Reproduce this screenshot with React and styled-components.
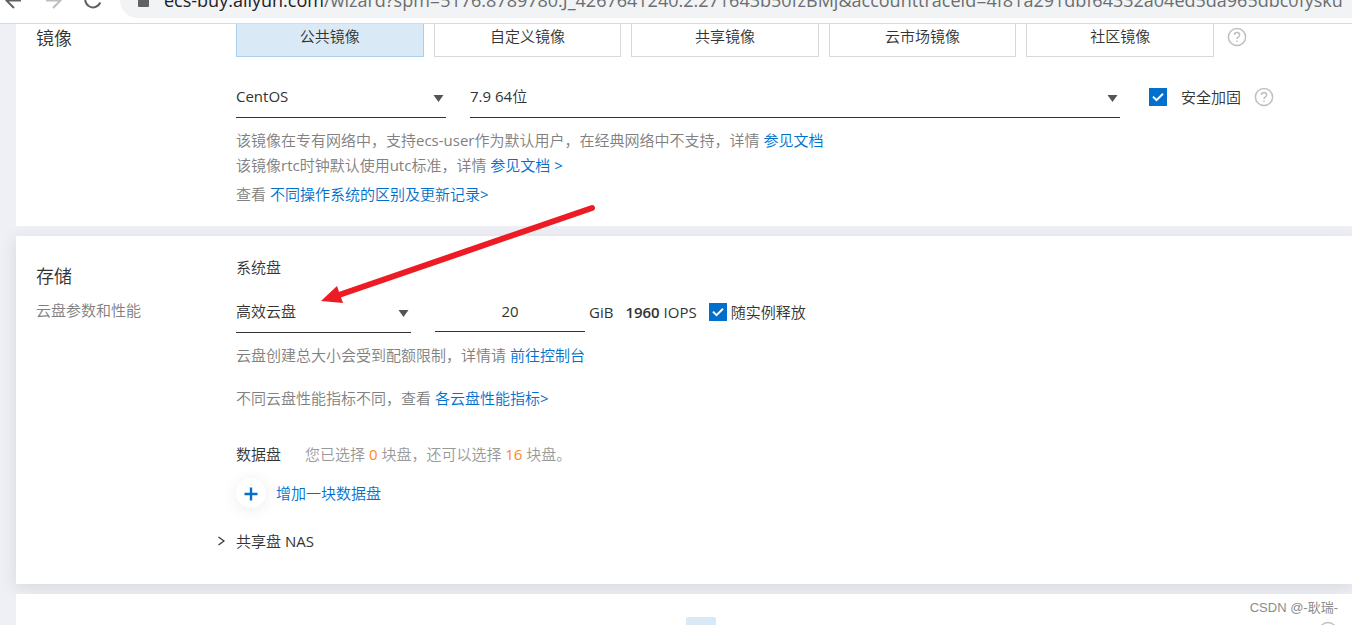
import { useState } from 'react'
import styled, { createGlobalStyle } from 'styled-components'

const GlobalStyle = createGlobalStyle`
    * {
        box-sizing: border-box;
    }
    body {
        margin: 0;
        background: #eff0f5;
        color: #333;
        font-family: "Open Sans", "Noto Sans CJK SC DemiLight", "Noto Sans CJK SC", sans-serif;
        font-size: 15px;
        font-weight: 400;
        line-height: 24px;
    }
    button, input, select {
        font: inherit;
        color: inherit;
    }
`

const Page = styled.div`
    display: flex;
    flex-direction: column;
    height: 100vh;
    overflow: hidden;
`

/* browser bar */
const BrowserBar = styled.header`
    display: flex;
    align-items: flex-end;
    flex: none;
    height: 24px;
    padding-bottom: 5px;
    overflow: hidden;
    background: #fff;
    border-bottom: 1px solid #d9dadd;
`
const NavButton = styled.button`
    display: grid;
    place-items: center;
    flex: none;
    width: 40px;
    height: 36px;
    padding: 0;
    border: 0;
    background: none;
    color: ${props => (props.$faded ? '#bdbec1' : '#5f6368')};
`
const AddressBar = styled.div`
    display: flex;
    align-items: center;
    gap: 14px;
    flex: 1;
    min-width: 0;
    height: 36px;
    padding-left: 18px;
    border-radius: 18px 0 0 18px;
    background: #f1f3f4;
    overflow: hidden;

    > svg {
        flex: none;
    }
`
const Url = styled.span`
    color: #6a6e73;
    font-size: 18px;
    white-space: nowrap;
`
const Host = styled.span`
    color: #202124;
`

/* cards */
const Main = styled.main`
    display: flex;
    flex-direction: column;
    flex: 1;
    gap: 10px;
    min-height: 0;
    padding-left: 16px;
`
const Card = styled.section`
    position: relative;
    display: grid;
    grid-template-columns: 200px minmax(0, 1fr);
    flex: none;
    padding: ${props => props.$padding || '0 20px'};
    background: #fff;
    box-shadow: ${props => (props.$raised ? '0 4px 16px rgba(50, 50, 60, 0.12)' : 'none')};
    z-index: ${props => (props.$raised ? 1 : 0)};
`
const NextCard = styled.section`
    display: flex;
    flex: 1;
    justify-content: space-between;
    align-items: flex-start;
    min-height: 0;
    padding: 2px 14px 0 670px;
    overflow: hidden;
    position: relative;
    z-index: 2;
    background: #fff;
`
const NextTab = styled.div`
    width: 30px;
    height: 30px;
    margin-top: 21px;
    border-radius: 2px 2px 0 0;
    background: #d9eaf6;
`
const Corner = styled.div`
    display: flex;
    flex-direction: column;
    align-items: flex-end;
`
const Watermark = styled.span`
    color: #8c8c8c;
    font-family: "Liberation Sans", "Noto Sans CJK SC", sans-serif;
    font-size: 13px;
`
const Title = styled.h2`
    margin: 0;
    font-size: 18px;
    font-weight: 400;
    line-height: 28px;
`
const Subtitle = styled.p`
    margin: 8px 0 0;
    color: #808080;
`
const Row = styled.div`
    display: flex;
    align-items: ${props => props.$align || 'center'};
    gap: ${props => props.$gap || '0'};
    margin-top: ${props => props.$top || '0'};
`
const Note = styled.p`
    margin: ${props => props.$top || '0'} 0 0;
    color: #808080;
`
const Link = styled.a`
    color: #0070cc;
    text-decoration: none;
`

/* form parts */
const Tabs = styled.div`
    display: grid;
    grid-template-columns: repeat(5, 1fr);
    align-content: end;
    gap: 10px;
    flex: 0 1 978px;
    height: 33px;
    overflow: hidden;
`
const Tab = styled.button`
    height: 42px;
    padding: 0;
    border: 1px solid ${props => (props.$active ? '#a9cfee' : '#d9d9d9')};
    background: ${props => (props.$active ? '#d9eaf6' : '#fff')};
    font-size: 15px;
`
const HelpButton = styled.button`
    display: grid;
    place-items: center;
    flex: none;
    width: 20px;
    height: ${props => props.$height || '26px'};
    padding: 0;
    border: 0;
    background: none;
    color: #bfbfbf;
`
const SelectBox = styled.div`
    display: grid;
    align-items: center;
    width: ${props => props.$width};
    min-width: 0;

    > * {
        grid-area: 1 / 1;
    }
    > svg {
        justify-self: end;
        margin-right: 2px;
        pointer-events: none;
    }
`
const SelectInput = styled.select`
    appearance: none;
    width: 100%;
    height: 42px;
    padding: 0 0 2px;
    border: 0;
    border-bottom: 1px solid #333;
    border-radius: 0;
    background: none;
`
const SizeInput = styled.input`
    width: 150px;
    height: 41px;
    padding: 0;
    border: 0;
    border-bottom: 1px solid #333;
    background: none;
    text-align: center;
`
const CheckLabel = styled.label`
    display: flex;
    align-items: center;
    gap: ${props => props.$gap};
    white-space: nowrap;
`
const CheckBox = styled.span`
    display: grid;
    width: 18px;
    height: 18px;

    > * {
        grid-area: 1 / 1;
    }
    > svg {
        pointer-events: none;
    }
`
const CheckInput = styled.input`
    appearance: none;
    width: 18px;
    height: 18px;
    margin: 0;
    border: 1px solid #0070cc;
    background: #fff;

    &:checked {
        background: #0070cc;
    }
`
const Bold = styled.b`
    font-weight: 600;
`
const Muted = styled.span`
    color: #999;
`
const Count = styled.span`
    color: #ff8a1f;
`
const AddButton = styled.button`
    display: flex;
    align-items: center;
    gap: 10px;
    margin-top: 12px;
    padding: 0;
    border: 0;
    background: none;
    color: #0070cc;
`
const PlusCircle = styled.span`
    display: grid;
    place-items: center;
    width: 30px;
    height: 30px;
    border-radius: 50%;
    background: #fff;
    box-shadow: 0 2px 16px rgba(0, 0, 0, 0.08);
`
const NasToggle = styled.button`
    display: flex;
    align-items: center;
    gap: 10px;
    margin: 21px 0 0 -19px;
    padding: 0;
    border: 0;
    background: none;
`
const RedArrow = styled.svg`
    position: absolute;
    top: -36px;
    left: 300px;
    pointer-events: none;
`

const HelpIcon = () => (
    <svg width="20" height="20" viewBox="0 0 20 20" fill="none" stroke="currentColor" strokeWidth="1.5">
        <circle cx="10" cy="10" r="8.6" />
        <path d="M7.4 8.1c0-1.6 1.1-2.6 2.6-2.6s2.6 1 2.6 2.4c0 1.9-2.6 2-2.6 4M10 13.4v1.7" />
    </svg>
)

const Select = ({ label, value, width }) => (
    <SelectBox $width={width}>
        <SelectInput aria-label={label} defaultValue={value}>
            <option>{value}</option>
        </SelectInput>
        <svg width="11" height="9" viewBox="0 0 11 9" fill="#555">
            <path d="M0.5 2h10L5.5 9z" />
        </svg>
    </SelectBox>
)

const Check = ({ children, gap }) => (
    <CheckLabel $gap={gap}>
        <CheckBox>
            <CheckInput type="checkbox" defaultChecked />
            <svg width="18" height="18" viewBox="0 0 18 18" fill="none" stroke="#fff" strokeWidth="2">
                <path d="M4 8.6l3.5 3.5L14 5.7" />
            </svg>
        </CheckBox>
        {children}
    </CheckLabel>
)

const tabs = ['公共镜像', '自定义镜像', '共享镜像', '云市场镜像', '社区镜像']

const App = () => {
    const [activeTab, setActiveTab] = useState(tabs[0])

    return (
        <Page>
            <GlobalStyle />
            <BrowserBar>
                <NavButton aria-label="Back">
                    <svg width="32" height="24" viewBox="0 0 32 24" fill="none" stroke="currentColor" strokeWidth="2">
                        <path d="M17 12.5H3M10 5l-7.5 7.5L10 20" />
                    </svg>
                </NavButton>
                <NavButton aria-label="Forward" $faded>
                    <svg width="32" height="24" viewBox="0 0 32 24" fill="none" stroke="currentColor" strokeWidth="2">
                        <path d="M2 12.5h14M9 5l7.5 7.5L9 20" />
                    </svg>
                </NavButton>
                <NavButton aria-label="Reload">
                    <svg width="32" height="24" viewBox="0 0 32 24" fill="none" stroke="currentColor" strokeWidth="2">
                        <path d="M16.3 14.500A7.800 7.800 0 1 1 15 6.500" />
                    </svg>
                </NavButton>
                <AddressBar>
                    <svg width="12" height="16" viewBox="0 0 12 16" fill="#5f6368">
                        <rect x="0" y="3" width="11" height="12" rx="1" />
                    </svg>
                    <Url>
                        <Host>ecs-buy.aliyun.com</Host>
                        /wizard?spm=5176.8789780.J_4267641240.2.271643b50fzBMj&amp;accounttraceid=4f81a291dbf64332a04ed5da965dbc0fysku
                    </Url>
                </AddressBar>
            </BrowserBar>

            <Main>
                <Card $padding="0 20px 20px">
                    <Title>镜像</Title>
                    <div>
                        <Row $gap="13px" $align="flex-start">
                            <Tabs>
                                {tabs.map(tab => (
                                    <Tab key={tab} $active={tab === activeTab} onClick={() => setActiveTab(tab)}>
                                        {tab}
                                    </Tab>
                                ))}
                            </Tabs>
                            <HelpButton aria-label="镜像帮助">
                                <HelpIcon />
                            </HelpButton>
                        </Row>
                        <Row $top="19px" $gap="29px">
                            <Row $gap="24px">
                                <Select label="操作系统" value="CentOS" width="210px" />
                                <Select label="版本" value="7.9 64位" width="650px" />
                            </Row>
                            <Row $gap="13px">
                                <Check gap="14px">安全加固</Check>
                                <HelpButton aria-label="安全加固帮助">
                                    <HelpIcon />
                                </HelpButton>
                            </Row>
                        </Row>
                        <Note $top="10px">
                            该镜像在专有网络中，支持ecs-user作为默认用户，在经典网络中不支持，详情 <Link href="#doc">参见文档</Link>
                        </Note>
                        <Note $top="1px">
                            该镜像rtc时钟默认使用utc标准，详情 <Link href="#doc">参见文档 &gt;</Link>
                        </Note>
                        <Note $top="5px">
                            查看 <Link href="#os">不同操作系统的区别及更新记录&gt;</Link>
                        </Note>
                    </div>
                </Card>

                <Card $raised $padding="19px 20px 31px">
                    <div>
                        <Row $top="7px">
                            <Title>存储</Title>
                        </Row>
                        <Subtitle>云盘参数和性能</Subtitle>
                    </div>
                    <div>
                        <div>系统盘</div>
                        <Row $top="12px" $gap="12px">
                            <Row $gap="24px" $align="flex-start">
                                <Select label="系统盘类型" value="高效云盘" width="175px" />
                                <Row $gap="4px">
                                    <SizeInput id="disk-size" defaultValue="20" />
                                    <label htmlFor="disk-size">GiB</label>
                                </Row>
                            </Row>
                            <span>
                                <Bold>1960</Bold> IOPS
                            </span>
                            <Check gap="4px">随实例释放</Check>
                        </Row>
                        <Note $top="10px">
                            云盘创建总大小会受到配额限制，详情请 <Link href="#console">前往控制台</Link>
                        </Note>
                        <Note $top="19px">
                            不同云盘性能指标不同，查看 <Link href="#perf">各云盘性能指标&gt;</Link>
                        </Note>
                        <Row $top="32px" $gap="24px">
                            <span>数据盘</span>
                            <Muted>
                                您已选择 <Count>0</Count> 块盘，还可以选择 <Count>16</Count> 块盘。
                            </Muted>
                        </Row>
                        <AddButton>
                            <PlusCircle>
                                <svg width="14" height="16" viewBox="0 0 14 16" stroke="#0070cc" strokeWidth="2.400">
                                    <path d="M7 2.5v13M0.5 9h13" />
                                </svg>
                            </PlusCircle>
                            增加一块数据盘
                        </AddButton>
                        <NasToggle>
                            <svg width="9" height="10" viewBox="0 0 9 10" fill="none" stroke="#333" strokeWidth="1.200">
                                <path d="M1.5 1l5.5 4-5.5 4" />
                            </svg>
                            共享盘 NAS
                        </NasToggle>
                    </div>
                    <RedArrow width="290" height="110" viewBox="316 200 290 110">
                        <path d="M592 208L336 296" stroke="#ed1c24" strokeWidth="6" strokeLinecap="round" />
                        <path d="M321 301L337 286L343 303z" fill="#ed1c24" />
                    </RedArrow>
                </Card>

                <NextCard>
                    <NextTab />
                    <Corner>
                        <Watermark>CSDN @-耿瑞-</Watermark>
                        <HelpButton $height="22px" aria-label="帮助">
                            <HelpIcon />
                        </HelpButton>
                    </Corner>
                </NextCard>
            </Main>
        </Page>
    )
}

export default App
